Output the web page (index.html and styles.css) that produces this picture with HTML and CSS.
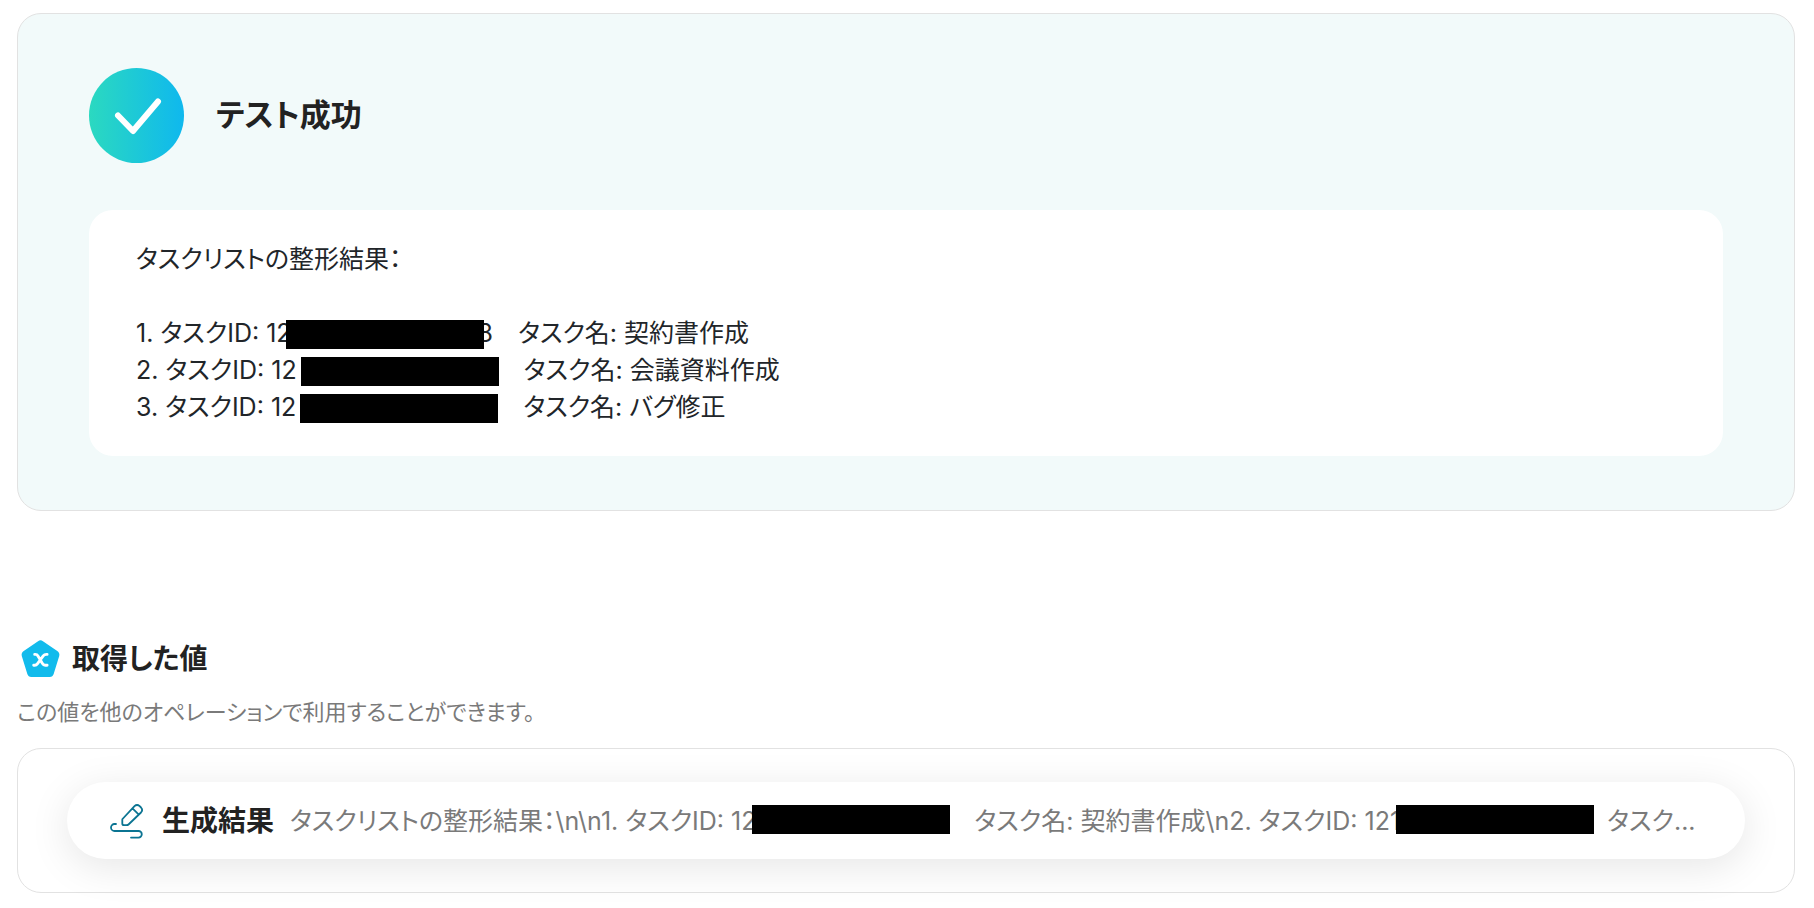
FILE: index.html
```html
<!DOCTYPE html>
<html lang="ja">
<head>
  <meta charset="UTF-8" />
  <meta name="viewport" content="width=device-width, initial-scale=1.0"/>
  <title>テスト成功</title>
  <link rel="stylesheet" href="styles.css">
</head>
<body>
  <main class="page">
    <section class="result-card">
      <div class="result-header">
        <svg class="result-icon" viewBox="0 0 95 95" aria-hidden="true">
          <defs>
            <linearGradient id="success" x1="0" y1="0" x2="1" y2="0">
              <stop offset="0" stop-color="#2bd9c0"/>
              <stop offset="1" stop-color="#0fb8ee"/>
            </linearGradient>
          </defs>
          <circle cx="47.5" cy="47.5" r="47.5" fill="url(#success)"/>
          <path d="M29 47.500L44 63L69 33.500" fill="none" stroke="#fff" stroke-width="6" stroke-linecap="round" stroke-linejoin="round"/>
        </svg>
        <h1 class="result-title">テスト成功</h1>
      </div>
      <div class="result-body">
        <p>タスクリストの整形結果：</p>
        <ol class="task-list">
          <li>1. タスクID: 12<span class="mask mask-over"></span>8　タスク名: 契約書作成</li>
          <li>2. タスクID: 12<span class="mask"></span>　タスク名: 会議資料作成</li>
          <li>3. タスクID: 12<span class="mask"></span>　タスク名: バグ修正</li>
        </ol>
      </div>
    </section>

    <section class="values">
      <div class="values-header">
        <svg class="values-icon" viewBox="0 0 40 40" aria-hidden="true">
          <path d="M17.500 2.200Q20 .4 22.500 2.200L37.200 12.300Q40 14.300 39.200 17.500L33.500 36Q32.500 39 29.500 39H10.500Q7.500 39 6.500 36L.8 17.500Q0 14.300 2.800 12.300Z" fill="#12bbec"/>
          <path d="M14 15.800H14.800Q16.500 15.800 17.400 17.400L22 25.200Q23 26.900 24.800 26.900H26.800M26.800 15.800H26Q24 15.800 22.800 17.400L17 25.200Q15.800 26.900 14 26.900H13" fill="none" stroke="#fff" stroke-width="2.900" stroke-linecap="round"/>
        </svg>
        <h2 class="values-title">取得した値</h2>
      </div>
      <p class="values-note">この値を他のオペレーションで利用することができます。</p>
      <div class="values-card">
        <div class="value-pill">
          <svg class="value-icon" viewBox="0 0 34 36" fill="none" stroke="#0b7492" stroke-width="1.800" stroke-linecap="round" stroke-linejoin="round" aria-hidden="true">
            <path d="M12.500 16L24.500 3.200Q27 .8 29.700 3.200L31 4.500Q33.300 7 31 9.500L18.500 21.500Q17.800 22.200 16.500 22.200H14Q12.300 22.200 12.300 20.500V17.500Q12.200 16.500 12.500 16ZM22.500 5.300L28.800 11.600"/>
            <path d="M6 21H4.500A3.500 3.500 0 0 0 4.500 28H28.500A3.300 3.300 0 0 1 28.500 34.600H21"/>
          </svg>
          <h3 class="value-name">生成結果</h3>
          <p class="value-text">タスクリストの整形結果：\n\n1. タスクID: 12<span class="mask"></span>　タスク名: 契約書作成\n2. タスクID: 121<span class="mask"></span>&nbsp; タスク...</p>
        </div>
      </div>
    </section>
  </main>
</body>
</html>
```
FILE: styles.css
```css
* {
  box-sizing: border-box;
}

body {
  margin: 0;
  font-family: Inter, 'Noto Sans CJK JP', sans-serif;
  font-feature-settings: 'palt';
  background: #fff;
  color: #222;
}

h1, h2, h3, p, ol {
  margin: 0;
  padding: 0;
}

.page {
  padding: 13px 19px 15px 17px;
}

.result-card {
  padding: 54px 71px;
  border: 1px solid #e2e2e2;
  border-radius: 24px;
  background: #f2fafa;
}

.result-header {
  display: flex;
  align-items: center;
  gap: 32px;
  margin-bottom: 47px;
}

.result-icon {
  width: 95px;
  height: 95px;
}

.result-title {
  padding-bottom: 2px;
  font-size: 31px;
  line-height: 46px;
}

.result-body {
  padding: 31px 47px 30px;
  border-radius: 24px;
  background: #fff;
  color: #212529;
  font-size: 25px;
  line-height: 37px;
}

.task-list {
  margin-top: 37px;
  list-style: none;
}

/* black bar that hides part of an ID */
.mask {
  display: inline-block;
  position: relative;
  width: 198px;
  height: 29px;
  margin: -4px 0 -4px 4px;
  vertical-align: -3px;
  background: #000;
}

.mask-over {
  margin-left: -6px;
  margin-right: -6px;
}

.values {
  margin-top: 128px;
}

.values-header {
  display: flex;
  align-items: center;
  gap: 12px;
  padding-left: 4px;
}

.values-icon {
  width: 39px;
  height: 39px;
}

.values-title {
  font-size: 28px;
  line-height: 38px;
}

.values-note {
  margin: 16px 0 18px;
  color: #7a7a7a;
  font-size: 22px;
  line-height: 36px;
}

.values-card {
  padding: 33px 49px 33px;
  border: 1px solid #e2e2e2;
  border-radius: 24px;
}

.value-pill {
  display: flex;
  align-items: center;
  height: 77px;
  padding: 0 43px;
  border-radius: 39px;
  background: #fff;
  box-shadow: 0 8px 40px rgba(0, 0, 0, 0.1);
}

.value-icon {
  flex: none;
  width: 34px;
  height: 36px;
}

.value-name {
  flex: none;
  margin: 0 16px 0 18px;
  font-size: 28px;
  line-height: 40px;
}

.value-text {
  min-width: 0;
  overflow: hidden;
  white-space: nowrap;
  color: #7a7a7a;
  font-size: 25px;
  line-height: 36px;
}

.value-text .mask {
  margin-left: -4px;
  margin-right: -1px;
  vertical-align: 0;
}
```
